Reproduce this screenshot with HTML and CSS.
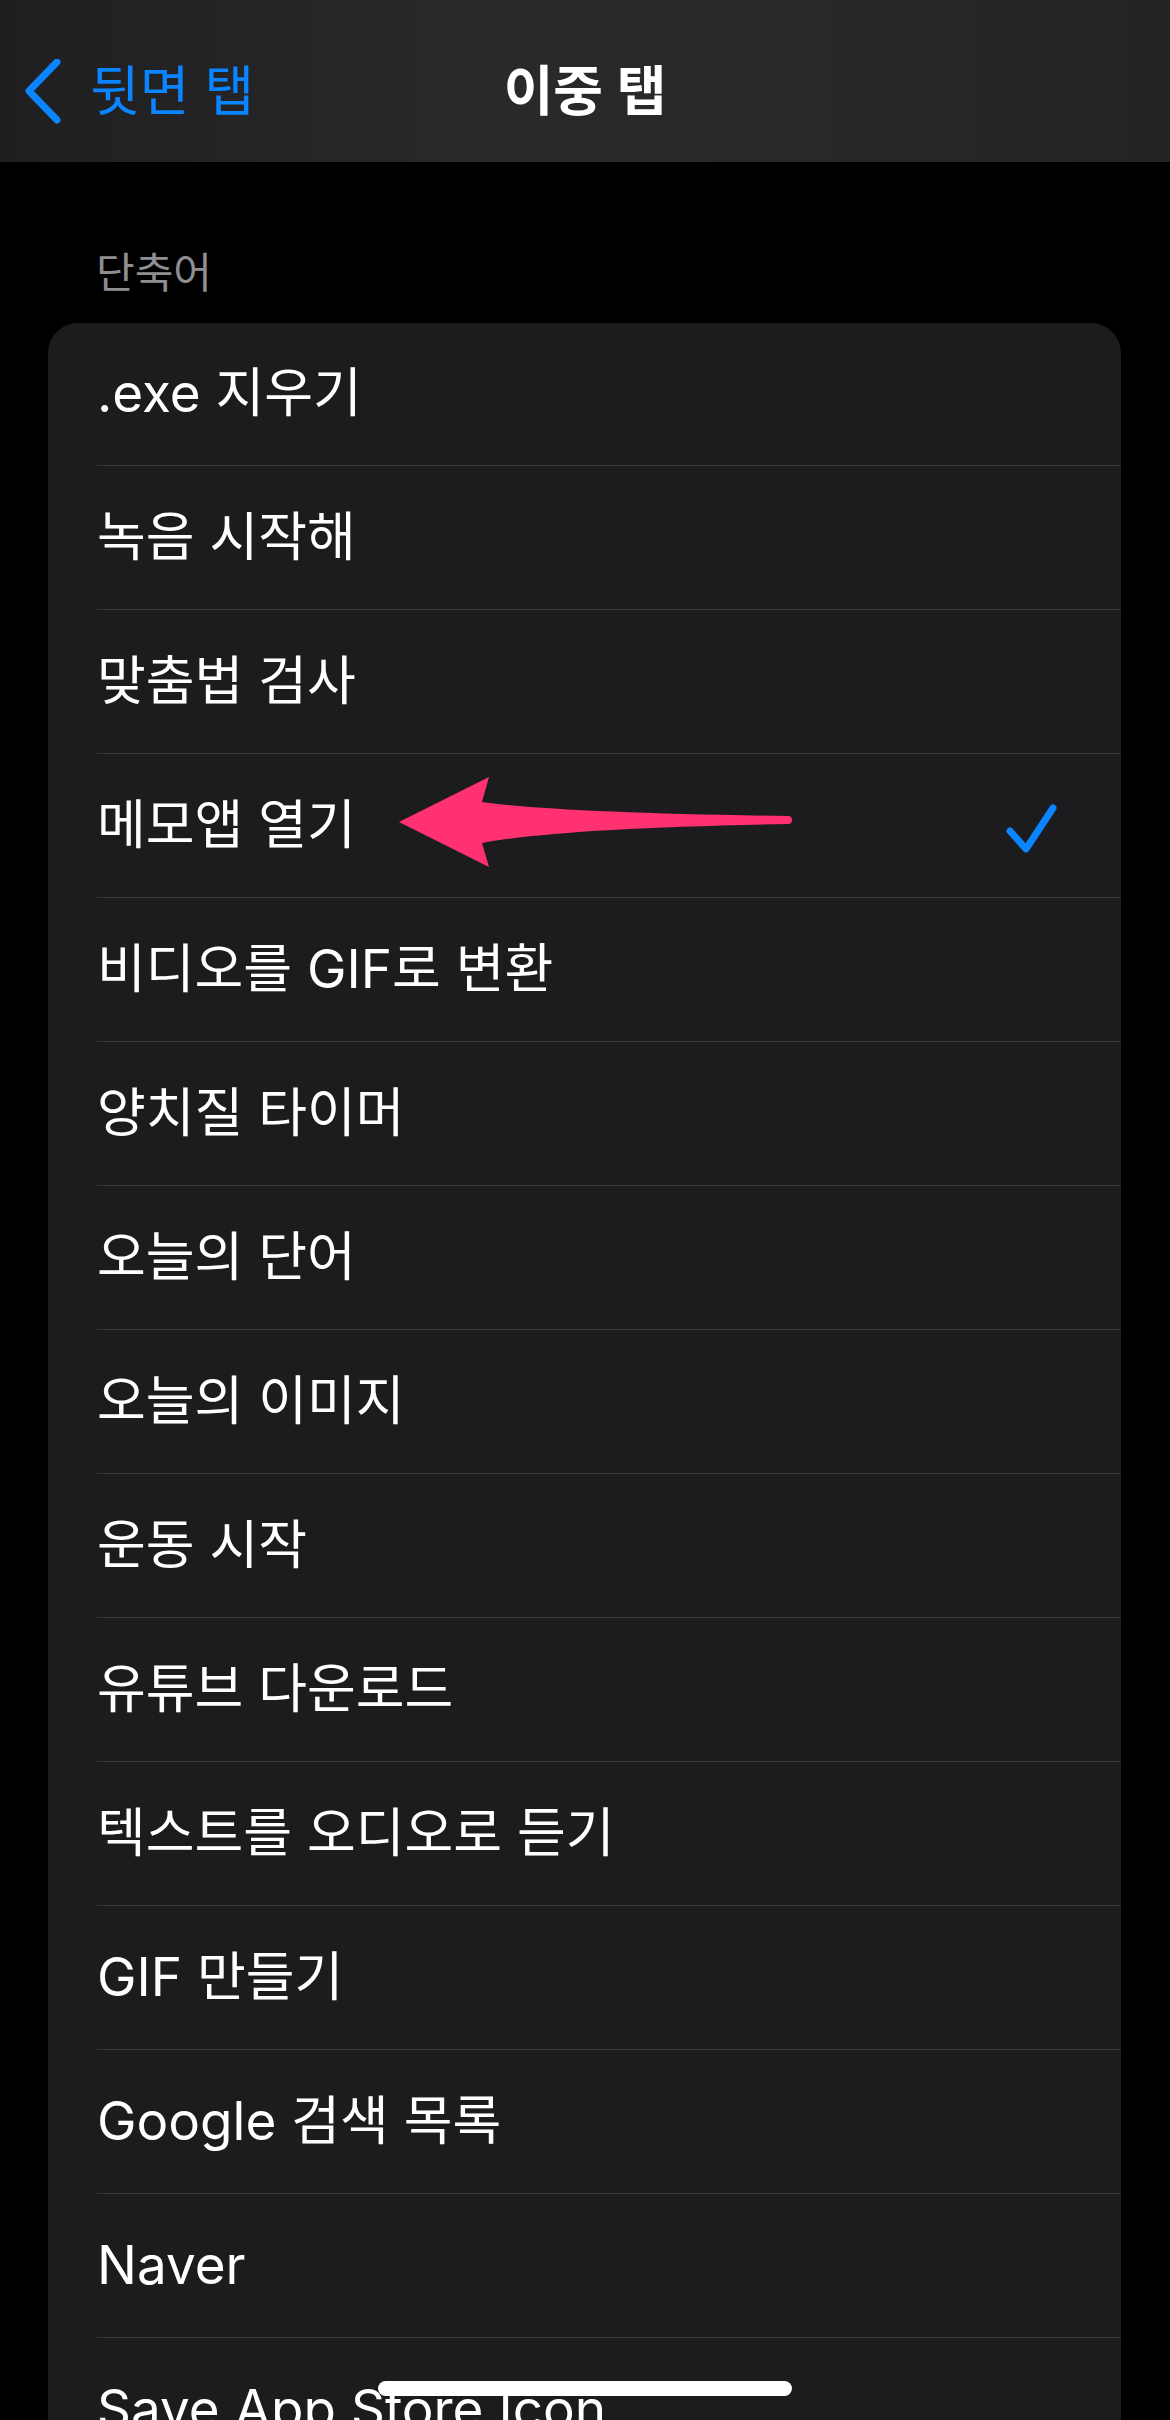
FILE: index.html
```
<!DOCTYPE html>
<html>
<head>
<meta charset="utf-8">
<link rel="stylesheet" href="styles.css">
</head>
<body>

<!-- navigation bar -->
<div class="navbar">
  <div class="nav-back">
    <svg class="chevron" width="40" height="66" viewBox="0 0 40 66">
      <path d="M33 3 L5 32 L33 61" fill="none" stroke="#0a84ff" stroke-width="7" stroke-linecap="round" stroke-linejoin="round"/>
    </svg>
    <span>뒷면 탭</span>
  </div>
  <div class="nav-title">이중 탭</div>
  <div></div>
</div>

<div class="section-header">단축어</div>

<div class="card">
  <div class="row"><div class="row-inner">.exe 지우기</div></div>
  <div class="row"><div class="row-inner">녹음 시작해</div></div>
  <div class="row"><div class="row-inner">맞춤법 검사</div></div>
  <div class="row selected">
    <div class="row-inner">
      <span>메모앱 열기</span>
      <svg class="check" width="56" height="56" viewBox="0 0 56 56">
        <path d="M7 33 L23 51 L50 10" fill="none" stroke="#0a84ff" stroke-width="7" stroke-linecap="round" stroke-linejoin="round"/>
      </svg>
    </div>
    <!-- pink annotation arrow -->
    <svg class="arrow" width="410" height="105" viewBox="0 0 410 105">
      <path d="M8 51 L98 6 L91 31 Q170 42 397 45 A4 4 0 0 1 397 53 Q170 57 91 72 L98 96 Z" fill="#ff3170"/>
    </svg>
  </div>
  <div class="row"><div class="row-inner">비디오를 GIF로 변환</div></div>
  <div class="row"><div class="row-inner">양치질 타이머</div></div>
  <div class="row"><div class="row-inner">오늘의 단어</div></div>
  <div class="row"><div class="row-inner">오늘의 이미지</div></div>
  <div class="row"><div class="row-inner">운동 시작</div></div>
  <div class="row"><div class="row-inner">유튜브 다운로드</div></div>
  <div class="row"><div class="row-inner">텍스트를 오디오로 듣기</div></div>
  <div class="row"><div class="row-inner">GIF 만들기</div></div>
  <div class="row"><div class="row-inner">Google 검색 목록</div></div>
  <div class="row"><div class="row-inner">Naver</div></div>
  <div class="row"><div class="row-inner">Save App Store Icon</div></div>
</div>

<div class="home-indicator"></div>

</body>
</html>
```

FILE: styles.css
```
body {
  margin: 0;
  background-color: #000;
  color: #fff;
  font-family: "Inter", "Noto Sans CJK KR", sans-serif;
}

/* top bar */
.navbar {
  box-sizing: border-box;
  height: 162px;
  padding-top: 22px;
  display: grid;
  grid-template-columns: 1fr auto 1fr;
  align-items: center;
  background: linear-gradient(90deg, #1f1f21 0%, #29292b 40%, #28282a 70%, #232325 100%);
}

.nav-back {
  display: flex;
  align-items: center;
  padding-left: 24px;
  color: #0a84ff;
  font-size: 54px;
  line-height: 1.2;
}

.chevron {
  margin-right: 26px;
}

.nav-title {
  font-size: 54px;
  font-weight: 600;
  line-height: 1.2;
}

.section-header {
  margin: 86px 0 25px 96px;
  font-size: 42px;
  line-height: 50px;
  color: #8e8e93;
}

/* list */
.card {
  margin: 0 49px 0 48px;
  background-color: #1c1c1e;
  border-radius: 30px;
  overflow: hidden;
}

.row {
  position: relative;
  padding-left: 49px;
}

.row-inner {
  height: 143px;
  display: flex;
  align-items: center;
  padding-right: 62px;
  border-bottom: 1px solid #38383a;
  font-size: 53px;
  line-height: 1.2;
}

.row:first-child .row-inner {
  height: 142px;
}

.row:last-child .row-inner {
  border-bottom: none;
}

.check {
  margin-left: auto;
}

.arrow {
  position: absolute;
  left: 343px;
  top: 17px;
}

.home-indicator {
  position: fixed;
  left: 50%;
  bottom: 24px;
  width: 414px;
  height: 15px;
  margin-left: -207px;
  border-radius: 8px;
  background-color: #fff;
}
```
